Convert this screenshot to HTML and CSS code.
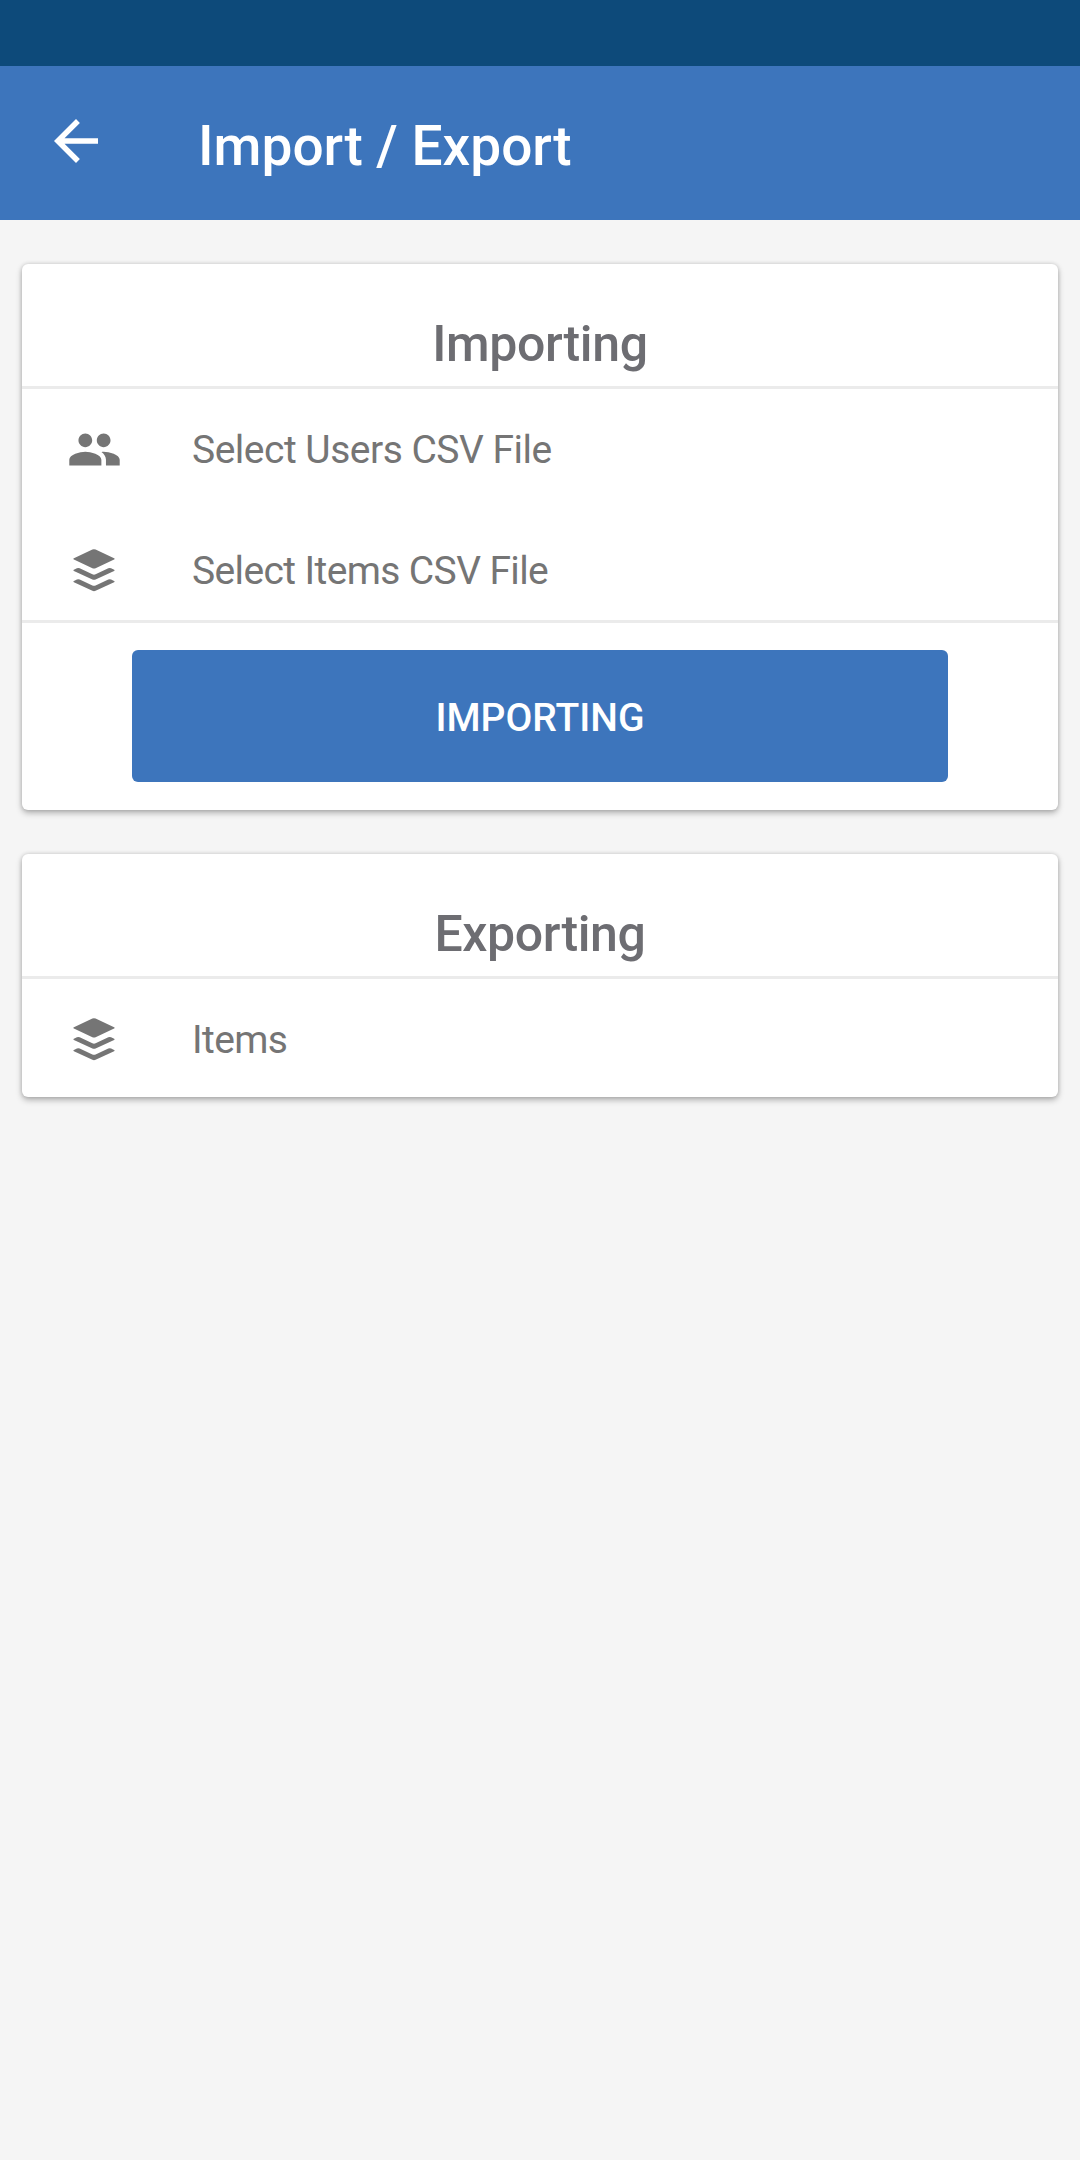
FILE: index.html
```html
<!DOCTYPE html>
<html lang="en">
<head>
<meta charset="utf-8">
<title>Import / Export</title>
<link rel="stylesheet" href="styles.css">
</head>
<body>
<svg class="defs" aria-hidden="true">
  <symbol id="layers" viewBox="0 0 42 43">
    <path d="M19.4 .5Q21-.2 22.6 .5L41.1 9.2Q42.2 9.9 41.1 10.6L22.6 19.2Q21 20 19.4 19.2L.9 10.6Q-.2 9.9 .9 9.2Z"/>
    <path d="M.9 20.7L3.9 19.3Q5.3 18.7 6.7 19.3L19.4 25.3Q21 26 22.6 25.3L35.3 19.3Q36.7 18.7 38.1 19.3L41.1 20.7Q42.2 21.3 41.1 22L22.6 30.5Q21 31.2 19.4 30.5L.9 22Q-.2 21.3 .9 20.7Z"/>
    <path d="M.9 31.9L3.9 30.5Q5.3 29.9 6.7 30.5L19.4 36.5Q21 37.2 22.6 36.5L35.3 30.5Q36.7 29.9 38.1 30.5L41.1 31.9Q42.2 32.5 41.1 33.2L22.6 41.8Q21 42.5 19.4 41.8L.9 33.2Q-.2 32.5 .9 31.9Z"/>
  </symbol>
</svg>
<div class="status-bar"></div>
<header class="app-bar">
  <svg class="back" viewBox="0 0 24 24"><path d="M20 11H7.83l5.59-5.59L12 4l-8 8 8 8 1.41-1.41L7.83 13H20v-2z"/></svg>
  <h1 class="title">Import / Export</h1>
</header>
<main class="content">
  <section class="card">
    <h2 class="heading">Importing</h2>
    <div class="row">
      <span class="icon"><svg class="people" viewBox="0 0 24 24"><path d="M16 11c1.66 0 2.99-1.34 2.99-3S17.66 5 16 5c-1.66 0-3 1.34-3 3s1.34 3 3 3zm-8 0c1.66 0 2.99-1.34 2.99-3S9.66 5 8 5C6.34 5 5 6.34 5 8s1.34 3 3 3zm0 2c-2.33 0-7 1.17-7 3.5V19h14v-2.5c0-2.33-4.67-3.5-7-3.5zm8 0c-.29 0-.62.02-.97.05 1.16.84 1.97 1.97 1.97 3.45V19h6v-2.5c0-2.33-4.67-3.5-7-3.5z"/></svg></span>
      <span class="label">Select Users CSV File</span>
    </div>
    <div class="row row-short">
      <span class="icon"><svg class="layers"><use href="#layers"/></svg></span>
      <span class="label label-items">Select Items CSV File</span>
    </div>
    <div class="actions"><button class="button">IMPORTING</button></div>
  </section>
  <section class="card">
    <h2 class="heading">Exporting</h2>
    <div class="row">
      <span class="icon"><svg class="layers"><use href="#layers"/></svg></span>
      <span class="label label-items">Items</span>
    </div>
  </section>
</main>
</body>
</html>
```
FILE: styles.css
```css
* { box-sizing: border-box; }
body {
  margin: 0;
  min-height: 2160px;
  background: #f5f5f5;
  font-family: Roboto, sans-serif;
  color: #757575;
}
.defs { display: none; }
svg { display: block; fill: currentColor; }
.status-bar { height: 66px; background: #0d4a7a; }
.app-bar {
  display: flex;
  align-items: flex-start;
  height: 154px;
  padding: 42px 42px 0 42.5px;
  background: #3d75bc;
  color: #fff;
}
.back { width: 66px; height: 66px; }
.title {
  margin: 6px 0 0 89.5px;
  font-size: 55px;
  font-weight: 500;
  line-height: 64px;
}
.content {
  display: flex;
  flex-direction: column;
  gap: 44px;
  padding: 44px 22px;
}
.card {
  background: #fff;
  border-radius: 6px;
  box-shadow: 0 3px 6px rgba(0, 0, 0, .28), 0 0 4px rgba(0, 0, 0, .14);
}
.heading {
  height: 125px;
  margin: 0;
  padding-top: 50px;
  border-bottom: 3px solid #ebebeb;
  color: #6d6d72;
  font-size: 50px;
  font-weight: 500;
  letter-spacing: -.35px;
  line-height: 60px;
  text-align: center;
}
.row { display: flex; align-items: center; height: 121px; }
.row-short { height: 110px; padding-top: 11px; }
.row:last-child { height: 118px; padding-top: 3px; }
.icon {
  display: flex;
  justify-content: center;
  width: 144px;
}
.people { width: 55px; height: 55px; }
.layers { width: 42px; height: 43px; }
.label {
  margin-left: 26px;
  font-size: 39px;
  letter-spacing: -.5px;
  line-height: 46px;
}
.label-items { letter-spacing: -.62px; }
.actions {
  height: 190px;
  padding: 27px 110px;
  border-top: 3px solid #ebebeb;
}
.button {
  display: block;
  width: 100%;
  height: 132px;
  padding: 4px 0 0;
  border: 0;
  border-radius: 6px;
  background: #3d75bc;
  color: #fff;
  font: 500 39px/46px Roboto, sans-serif;
}
```
